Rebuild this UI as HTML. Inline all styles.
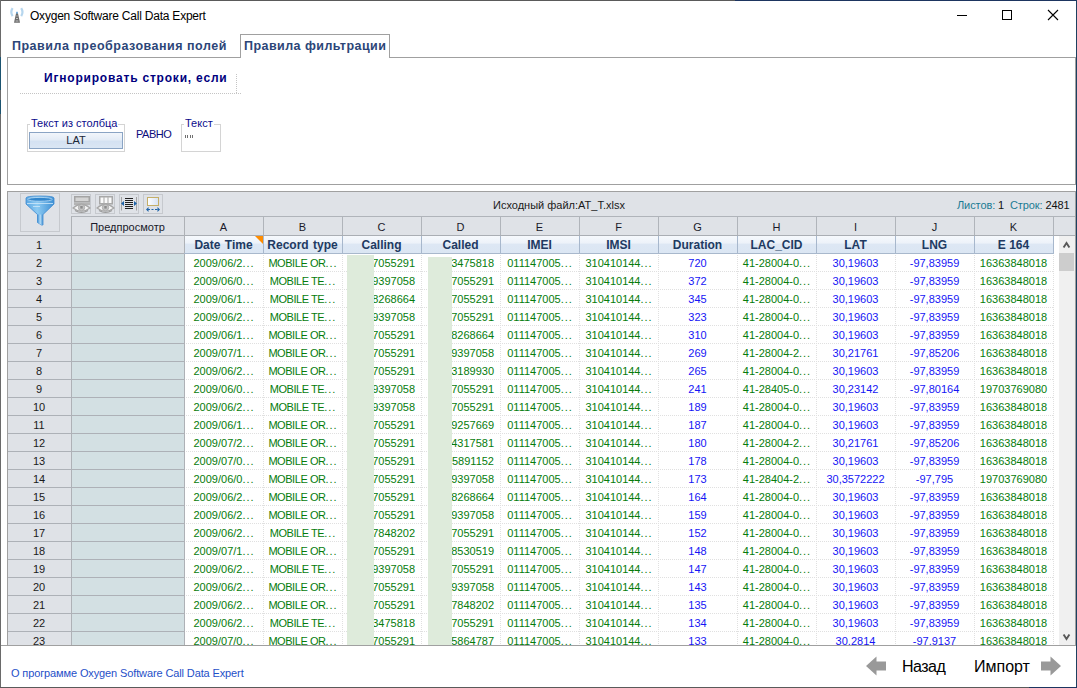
<!DOCTYPE html>
<html><head><meta charset="utf-8">
<style>
*{box-sizing:border-box}
html,body{margin:0;padding:0}
body{width:1077px;height:688px;overflow:hidden;position:relative;background:#fff;font-family:"Liberation Sans",sans-serif;}
.a{position:absolute}
.title{left:30px;top:8px;font-size:12px;color:#000;white-space:nowrap;line-height:16px;letter-spacing:-0.22px}
.tab1{left:12px;top:38px;font-size:12.5px;font-weight:bold;color:#2c4678;letter-spacing:0.5px;white-space:nowrap;line-height:16px}
.tab2box{left:240px;top:34px;width:150px;height:24px;border:1px solid #a0a0a0;border-bottom:none;background:#fff}
.tab2{left:244px;top:38px;font-size:12.5px;font-weight:bold;color:#2c4678;letter-spacing:0.45px;white-space:nowrap;line-height:16px}
.panel{left:7px;top:57px;width:1069px;height:128px;border:1px solid #a0a0a0;background:#fff}
.ign{left:44px;top:70px;font-size:12px;font-weight:bold;color:#00007e;letter-spacing:0.8px;white-space:nowrap;line-height:16px}
.dh{left:20px;top:93px;width:221px;height:1px;background-image:linear-gradient(90deg,#c4c4c4 50%,transparent 50%);background-size:2px 1px}
.dv{left:236px;top:74px;width:1px;height:19px;background-image:linear-gradient(180deg,#c4c4c4 50%,transparent 50%);background-size:1px 2px}
.gb{border:1px solid #d4d4d4}
.gl{font-size:11px;color:#0c0c8c;background:#fff;white-space:nowrap;line-height:13px;padding:0 1px}
.btn{left:29px;top:132px;width:94px;height:17px;border:1px solid #8aa4c4;background:linear-gradient(#f2f6fb 0%,#e4ecf6 45%,#d4e2f2 55%,#dae6f4 100%);font-size:11px;color:#1c2838;text-align:center;line-height:15px;letter-spacing:0px}
.ib{border:1px solid #c6c9ce;background:#dfe2e7}
.clip{left:0;top:0;width:1077px;height:645px;overflow:hidden}
.hl{position:absolute;height:1px}
.vl{position:absolute;width:1px}
.lt{position:absolute;top:217px;width:79px;height:19px;font-size:11px;color:#1a1a2a;text-align:center;line-height:20px}
.fh{position:absolute;top:237px;width:79px;height:17px;font-size:12px;font-weight:bold;color:#213a62;text-align:center;line-height:17px;white-space:nowrap}
.dc{position:absolute;width:79px;height:18px;font-size:11px;line-height:18px;text-align:center;white-space:nowrap}
.dc.r{text-align:right;padding-right:6px}
.el{letter-spacing:0.95px;margin-right:-0.95px}
.bb{letter-spacing:-0.45px}
.bb .el{letter-spacing:0.95px}
.g{color:#067c0c}
.b{color:#1515f5}
.rh{position:absolute;left:7px;width:64px;height:18px;font-size:11px;color:#1a1a1a;text-align:center;line-height:18px}
</style></head><body>
<!-- window borders -->
<div class="a" style="left:0;top:0;width:735px;height:1px;background:#5a5a5a"></div>
<div class="a" style="left:735px;top:0;width:342px;height:1px;background:#1d3560"></div>
<div class="a" style="left:0;top:0;width:1px;height:688px;background:#6a6a6a"></div>
<div class="a" style="left:0;top:57px;width:1px;height:33px;background:#1c5470"></div>
<div class="a" style="left:0;top:100px;width:1px;height:14px;background:#1c5470"></div>
<div class="a" style="left:1076px;top:0;width:1px;height:688px;background:#1d4060"></div>
<div class="a" style="left:0;top:687px;width:1029px;height:1px;background:#5a5a5a"></div>
<div class="a" style="left:1029px;top:687px;width:48px;height:1px;background:#1d3560"></div>

<!-- title bar -->
<svg class="a" style="left:8px;top:5px" width="18" height="20" viewBox="0 0 18 20">
 <path d="M4.6 3.2 Q2 7.2 4.6 11.2" stroke="#b6d6ee" stroke-width="2.2" fill="none"/>
 <path d="M13.2 3.2 Q15.8 7.2 13.2 11.2" stroke="#b6d6ee" stroke-width="2.2" fill="none"/>
 <path d="M8.2 7.5 L9.8 7.5 L12 17.8 L6 17.8 Z" fill="#6c6c6c"/>
 <path d="M8.4 11 H9.6 M8 13.5 H10 M7.6 16 H10.4" stroke="#d8d8d8" stroke-width="0.8"/>
 <rect x="8" y="6.8" width="2" height="1.8" fill="#78b0dc"/>
</svg>
<div class="a title">Oxygen Software Call Data Expert</div>
<svg class="a" style="left:950px;top:5px" width="120" height="20" viewBox="0 0 120 20">
 <path d="M7 10.5 H17" stroke="#000" stroke-width="1"/>
 <rect x="52.5" y="5.5" width="9" height="9" stroke="#000" stroke-width="1" fill="none"/>
 <path d="M98 5 L108 15 M108 5 L98 15" stroke="#000" stroke-width="1.1"/>
</svg>

<!-- tabs -->
<div class="a tab1">Правила преобразования полей</div>
<div class="a panel"></div>
<div class="a tab2box"></div>
<div class="a tab2">Правила фильтрации</div>

<div class="a ign">Игнорировать строки, если</div>
<div class="a dh"></div>
<div class="a dv"></div>

<div class="a gb" style="left:27px;top:124px;width:98px;height:28px"></div>
<div class="a gl" style="left:30px;top:117px">Текст из столбца</div>
<div class="a btn">LAT</div>
<div class="a" style="left:136px;top:128px;font-size:11px;color:#0c0c7c;line-height:13px;letter-spacing:-0.5px">РАВНО</div>
<div class="a gb" style="left:181px;top:124px;width:40px;height:28px"></div>
<div class="a gl" style="left:184px;top:117px">Текст</div>
<svg class="a" style="left:185px;top:135px" width="8" height="4"><path d="M0.5 0V3M2.5 0V3M5.5 0V3M7.5 0V3" stroke="#707070" stroke-width="1"/></svg>

<!-- grid -->
<div class="a" style="left:7px;top:191px;width:1069px;height:455px;background:#fff"></div>
<div class="a" style="left:8px;top:192px;width:1067px;height:43px;background:#dfe2e7"></div>
<div class="a ib" style="left:20px;top:193px;width:40px;height:39px"></div>
<svg class="a" style="left:20px;top:193px" width="40" height="39" viewBox="0 0 40 39">
 <defs>
  <linearGradient id="fg" x1="0" x2="1"><stop offset="0" stop-color="#5aa6e2"/><stop offset="0.4" stop-color="#8ccaf2"/><stop offset="1" stop-color="#3e90d4"/></linearGradient>
  <linearGradient id="sg" x1="0" x2="1"><stop offset="0" stop-color="#3d8ed4"/><stop offset="0.5" stop-color="#b4dcf6"/><stop offset="1" stop-color="#3a8ad0"/></linearGradient>
 </defs>
 <path d="M6 5 Q6 3 20 3 Q34 3 34 5 L34 11 L23 21.5 L23 32 L21.5 32 L17.5 29.5 L17.5 21.5 L6 11 Z" fill="url(#fg)" stroke="#3f8ad0" stroke-width="0.8"/>
 <path d="M17.5 21.5 L23 21.5 L23 32 L21.5 32 L17.5 29.5 Z" fill="url(#sg)"/>
 <ellipse cx="20" cy="6.3" rx="12.3" ry="1.9" fill="#3286cc" stroke="#c4e2f8" stroke-width="0.7"/>
 <path d="M7 10.5 L33 10.5" stroke="#cfe8fa" stroke-width="0.8"/>
 <path d="M13 13.5 L20 13.5" stroke="#e8f4fc" stroke-width="0.6"/>
</svg>
<div class="a ib" style="left:71px;top:194px;width:20px;height:20px"></div>
<div class="a ib" style="left:95px;top:194px;width:20px;height:20px"></div>
<div class="a ib" style="left:119px;top:194px;width:20px;height:20px"></div>
<div class="a ib" style="left:143px;top:194px;width:20px;height:20px"></div>
<svg class="a" style="left:71px;top:194px" width="92" height="20" viewBox="0 0 92 20">
 <!-- icon1 -->
 <rect x="3.75" y="2.75" width="14.5" height="5" fill="#d4d4d4" stroke="#a4a4a4" stroke-width="1.5"/>
 <path d="M3 8.5 H19 V11 H3 Z" fill="#b4b4b4"/>
 <path d="M2 14 Q10.5 6.5 19 14 Q10.5 20.5 2 14 Z" fill="#f6f6f6" stroke="#a8a8a8" stroke-width="1.2"/>
 <path d="M4 16.5 Q10.5 20.5 17 16.5" stroke="#9a9a9a" stroke-width="1.2" fill="none"/>
 <circle cx="10.5" cy="13.5" r="3.2" fill="#c4c4c4" stroke="#a4a4a4" stroke-width="0.8"/>
 <rect x="9.3" y="12" width="2.4" height="2.6" fill="#8c8c8c"/>
 <!-- icon2 -->
 <rect x="28.75" y="2.75" width="12.5" height="7" fill="#fafafa" stroke="#a8a8a8" stroke-width="1.5"/>
 <path d="M33 3 V9.5 M37 3 V9.5" stroke="#b4b4b4" stroke-width="1.2"/>
 <path d="M26 14 Q34.5 6.5 43 14 Q34.5 20.5 26 14 Z" fill="#f6f6f6" stroke="#a8a8a8" stroke-width="1.2"/>
 <path d="M28 16.5 Q34.5 20.5 41 16.5" stroke="#9a9a9a" stroke-width="1.2" fill="none"/>
 <circle cx="34.5" cy="13.5" r="3.2" fill="#c4c4c4" stroke="#a4a4a4" stroke-width="0.8"/>
 <rect x="33.3" y="12" width="2.4" height="2.6" fill="#8c8c8c"/>
 <!-- icon3 -->
 <path d="M50.5 3 V16.5 M65.5 3 V16.5" stroke="#a4a4a4"/>
 <path d="M54 4.5 H62 M54 6.5 H62 M54 8.5 H62 M54 10.5 H62 M54 12.5 H62 M54 14.5 H62" stroke="#202020"/>
 <path d="M50 9.5 L53 7 L53 12 Z M66 9.5 L63 7 L63 12 Z" fill="#1f64a8"/>
 <!-- icon4 -->
 <defs><linearGradient id="i4" x1="0" x2="1"><stop offset="0" stop-color="#ffffff"/><stop offset="1" stop-color="#d6e2f4"/></linearGradient></defs>
 <rect x="76.5" y="3.5" width="11" height="8" fill="url(#i4)" stroke="#c4ae68"/>
 <path d="M75 15.5 L77.5 13 L77.5 18 Z M89 15.5 L86.5 13 L86.5 18 Z" fill="#1f64a8"/>
 <path d="M77 15.5 H79 M80.5 15.5 H82.5 M84 15.5 H86.5" stroke="#1f64a8" stroke-width="1.2"/>
</svg>

<div class="a" style="left:493px;top:198px;font-size:11px;color:#1a1a1a;line-height:14px;white-space:nowrap">Исходный файл:AT_T.xlsx</div>
<div class="a" style="left:957px;top:198px;font-size:11px;line-height:14px;white-space:nowrap;letter-spacing:-0.1px"><span style="color:#1b7b93">Листов:</span><span style="color:#111"> 1</span><span style="color:#1b7b93">&nbsp; Строк:</span><span style="color:#111"> 2481</span></div>

<div class="a clip">
<div class="a" style="left:8px;top:236px;width:63px;height:409px;background:#dfe2e7"></div>
<div class="a" style="left:72px;top:236px;width:112px;height:17px;background:#dfe2e7"></div>
<div class="a" style="left:72px;top:254px;width:112px;height:391px;background:#d3e0e3"></div>
<div class="a" style="left:184px;top:236px;width:869px;height:17px;background:linear-gradient(#f6f9fd 0%,#edf2f9 40%,#dde7f4 50%,#dbe6f3 100%)"></div>
<div class="hl" style="left:184px;top:271px;width:870px;background-image:linear-gradient(90deg,#e0e0e0 50%,transparent 50%);background-size:2px 1px"></div>
<div class="hl" style="left:184px;top:289px;width:870px;background-image:linear-gradient(90deg,#e0e0e0 50%,transparent 50%);background-size:2px 1px"></div>
<div class="hl" style="left:184px;top:307px;width:870px;background-image:linear-gradient(90deg,#e0e0e0 50%,transparent 50%);background-size:2px 1px"></div>
<div class="hl" style="left:184px;top:325px;width:870px;background-image:linear-gradient(90deg,#e0e0e0 50%,transparent 50%);background-size:2px 1px"></div>
<div class="hl" style="left:184px;top:343px;width:870px;background-image:linear-gradient(90deg,#e0e0e0 50%,transparent 50%);background-size:2px 1px"></div>
<div class="hl" style="left:184px;top:361px;width:870px;background-image:linear-gradient(90deg,#e0e0e0 50%,transparent 50%);background-size:2px 1px"></div>
<div class="hl" style="left:184px;top:379px;width:870px;background-image:linear-gradient(90deg,#e0e0e0 50%,transparent 50%);background-size:2px 1px"></div>
<div class="hl" style="left:184px;top:397px;width:870px;background-image:linear-gradient(90deg,#e0e0e0 50%,transparent 50%);background-size:2px 1px"></div>
<div class="hl" style="left:184px;top:415px;width:870px;background-image:linear-gradient(90deg,#e0e0e0 50%,transparent 50%);background-size:2px 1px"></div>
<div class="hl" style="left:184px;top:433px;width:870px;background-image:linear-gradient(90deg,#e0e0e0 50%,transparent 50%);background-size:2px 1px"></div>
<div class="hl" style="left:184px;top:451px;width:870px;background-image:linear-gradient(90deg,#e0e0e0 50%,transparent 50%);background-size:2px 1px"></div>
<div class="hl" style="left:184px;top:469px;width:870px;background-image:linear-gradient(90deg,#e0e0e0 50%,transparent 50%);background-size:2px 1px"></div>
<div class="hl" style="left:184px;top:487px;width:870px;background-image:linear-gradient(90deg,#e0e0e0 50%,transparent 50%);background-size:2px 1px"></div>
<div class="hl" style="left:184px;top:505px;width:870px;background-image:linear-gradient(90deg,#e0e0e0 50%,transparent 50%);background-size:2px 1px"></div>
<div class="hl" style="left:184px;top:523px;width:870px;background-image:linear-gradient(90deg,#e0e0e0 50%,transparent 50%);background-size:2px 1px"></div>
<div class="hl" style="left:184px;top:541px;width:870px;background-image:linear-gradient(90deg,#e0e0e0 50%,transparent 50%);background-size:2px 1px"></div>
<div class="hl" style="left:184px;top:559px;width:870px;background-image:linear-gradient(90deg,#e0e0e0 50%,transparent 50%);background-size:2px 1px"></div>
<div class="hl" style="left:184px;top:577px;width:870px;background-image:linear-gradient(90deg,#e0e0e0 50%,transparent 50%);background-size:2px 1px"></div>
<div class="hl" style="left:184px;top:595px;width:870px;background-image:linear-gradient(90deg,#e0e0e0 50%,transparent 50%);background-size:2px 1px"></div>
<div class="hl" style="left:184px;top:613px;width:870px;background-image:linear-gradient(90deg,#e0e0e0 50%,transparent 50%);background-size:2px 1px"></div>
<div class="hl" style="left:184px;top:631px;width:870px;background-image:linear-gradient(90deg,#e0e0e0 50%,transparent 50%);background-size:2px 1px"></div>
<div class="hl" style="left:184px;top:649px;width:870px;background-image:linear-gradient(90deg,#e0e0e0 50%,transparent 50%);background-size:2px 1px"></div>
<div class="vl" style="left:263px;top:254px;height:391px;background-image:linear-gradient(180deg,#e0e0e0 50%,transparent 50%);background-size:1px 2px;background-position:0 1px"></div>
<div class="vl" style="left:342px;top:254px;height:391px;background-image:linear-gradient(180deg,#e0e0e0 50%,transparent 50%);background-size:1px 2px;background-position:0 1px"></div>
<div class="vl" style="left:421px;top:254px;height:391px;background-image:linear-gradient(180deg,#e0e0e0 50%,transparent 50%);background-size:1px 2px;background-position:0 1px"></div>
<div class="vl" style="left:500px;top:254px;height:391px;background-image:linear-gradient(180deg,#e0e0e0 50%,transparent 50%);background-size:1px 2px;background-position:0 1px"></div>
<div class="vl" style="left:579px;top:254px;height:391px;background-image:linear-gradient(180deg,#e0e0e0 50%,transparent 50%);background-size:1px 2px;background-position:0 1px"></div>
<div class="vl" style="left:658px;top:254px;height:391px;background-image:linear-gradient(180deg,#e0e0e0 50%,transparent 50%);background-size:1px 2px;background-position:0 1px"></div>
<div class="vl" style="left:737px;top:254px;height:391px;background-image:linear-gradient(180deg,#e0e0e0 50%,transparent 50%);background-size:1px 2px;background-position:0 1px"></div>
<div class="vl" style="left:816px;top:254px;height:391px;background-image:linear-gradient(180deg,#e0e0e0 50%,transparent 50%);background-size:1px 2px;background-position:0 1px"></div>
<div class="vl" style="left:895px;top:254px;height:391px;background-image:linear-gradient(180deg,#e0e0e0 50%,transparent 50%);background-size:1px 2px;background-position:0 1px"></div>
<div class="vl" style="left:974px;top:254px;height:391px;background-image:linear-gradient(180deg,#e0e0e0 50%,transparent 50%);background-size:1px 2px;background-position:0 1px"></div>
<div class="vl" style="left:1053px;top:254px;height:391px;background-image:linear-gradient(180deg,#e0e0e0 50%,transparent 50%);background-size:1px 2px;background-position:0 1px"></div>
<div class="hl" style="left:71px;top:216px;width:1004px;background:#b0b4ba"></div>
<div class="hl" style="left:8px;top:235px;width:1067px;background:#aaaeb4"></div>
<div class="vl" style="left:71px;top:216px;height:429px;background:#aeb1b6"></div>
<div class="vl" style="left:184px;top:216px;height:429px;background:#aeb1b6"></div>
<div class="vl" style="left:263px;top:216px;height:19px;background:#b0b4ba"></div>
<div class="vl" style="left:263px;top:236px;height:17px;background:#a7b7cc"></div>
<div class="vl" style="left:342px;top:216px;height:19px;background:#b0b4ba"></div>
<div class="vl" style="left:342px;top:236px;height:17px;background:#a7b7cc"></div>
<div class="vl" style="left:421px;top:216px;height:19px;background:#b0b4ba"></div>
<div class="vl" style="left:421px;top:236px;height:17px;background:#a7b7cc"></div>
<div class="vl" style="left:500px;top:216px;height:19px;background:#b0b4ba"></div>
<div class="vl" style="left:500px;top:236px;height:17px;background:#a7b7cc"></div>
<div class="vl" style="left:579px;top:216px;height:19px;background:#b0b4ba"></div>
<div class="vl" style="left:579px;top:236px;height:17px;background:#a7b7cc"></div>
<div class="vl" style="left:658px;top:216px;height:19px;background:#b0b4ba"></div>
<div class="vl" style="left:658px;top:236px;height:17px;background:#a7b7cc"></div>
<div class="vl" style="left:737px;top:216px;height:19px;background:#b0b4ba"></div>
<div class="vl" style="left:737px;top:236px;height:17px;background:#a7b7cc"></div>
<div class="vl" style="left:816px;top:216px;height:19px;background:#b0b4ba"></div>
<div class="vl" style="left:816px;top:236px;height:17px;background:#a7b7cc"></div>
<div class="vl" style="left:895px;top:216px;height:19px;background:#b0b4ba"></div>
<div class="vl" style="left:895px;top:236px;height:17px;background:#a7b7cc"></div>
<div class="vl" style="left:974px;top:216px;height:19px;background:#b0b4ba"></div>
<div class="vl" style="left:974px;top:236px;height:17px;background:#a7b7cc"></div>
<div class="vl" style="left:1053px;top:216px;height:19px;background:#b0b4ba"></div>
<div class="vl" style="left:1053px;top:236px;height:17px;background:#a7b7cc"></div>
<div class="hl" style="left:184px;top:253px;width:870px;background:#a8b8cc"></div>
<svg class="a" style="left:255px;top:236px" width="8" height="8"><path d="M0 0H8V8Z" fill="#ff8c00"/></svg>
<div class="hl" style="left:8px;top:253px;width:176px;background:#adb1b7"></div>
<div class="hl" style="left:8px;top:271px;width:176px;background:#adb1b7"></div>
<div class="hl" style="left:8px;top:289px;width:176px;background:#adb1b7"></div>
<div class="hl" style="left:8px;top:307px;width:176px;background:#adb1b7"></div>
<div class="hl" style="left:8px;top:325px;width:176px;background:#adb1b7"></div>
<div class="hl" style="left:8px;top:343px;width:176px;background:#adb1b7"></div>
<div class="hl" style="left:8px;top:361px;width:176px;background:#adb1b7"></div>
<div class="hl" style="left:8px;top:379px;width:176px;background:#adb1b7"></div>
<div class="hl" style="left:8px;top:397px;width:176px;background:#adb1b7"></div>
<div class="hl" style="left:8px;top:415px;width:176px;background:#adb1b7"></div>
<div class="hl" style="left:8px;top:433px;width:176px;background:#adb1b7"></div>
<div class="hl" style="left:8px;top:451px;width:176px;background:#adb1b7"></div>
<div class="hl" style="left:8px;top:469px;width:176px;background:#adb1b7"></div>
<div class="hl" style="left:8px;top:487px;width:176px;background:#adb1b7"></div>
<div class="hl" style="left:8px;top:505px;width:176px;background:#adb1b7"></div>
<div class="hl" style="left:8px;top:523px;width:176px;background:#adb1b7"></div>
<div class="hl" style="left:8px;top:541px;width:176px;background:#adb1b7"></div>
<div class="hl" style="left:8px;top:559px;width:176px;background:#adb1b7"></div>
<div class="hl" style="left:8px;top:577px;width:176px;background:#adb1b7"></div>
<div class="hl" style="left:8px;top:595px;width:176px;background:#adb1b7"></div>
<div class="hl" style="left:8px;top:613px;width:176px;background:#adb1b7"></div>
<div class="hl" style="left:8px;top:631px;width:176px;background:#adb1b7"></div>
<div class="a" style="left:71px;top:217px;width:113px;height:19px;font-size:11px;color:#1a1a2a;text-align:center;line-height:20px">Предпросмотр</div>
<div class="lt" style="left:184px">A</div>
<div class="lt" style="left:263px">B</div>
<div class="lt" style="left:342px">C</div>
<div class="lt" style="left:421px">D</div>
<div class="lt" style="left:500px">E</div>
<div class="lt" style="left:579px">F</div>
<div class="lt" style="left:658px">G</div>
<div class="lt" style="left:737px">H</div>
<div class="lt" style="left:816px">I</div>
<div class="lt" style="left:895px">J</div>
<div class="lt" style="left:974px">K</div>
<div class="fh" style="left:184px;word-spacing:1px">Date Time</div>
<div class="fh" style="left:263px;word-spacing:1px">Record type</div>
<div class="fh" style="left:342px">Calling</div>
<div class="fh" style="left:421px">Called</div>
<div class="fh" style="left:500px">IMEI</div>
<div class="fh" style="left:579px">IMSI</div>
<div class="fh" style="left:658px">Duration</div>
<div class="fh" style="left:737px">LAC_CID</div>
<div class="fh" style="left:816px">LAT</div>
<div class="fh" style="left:895px">LNG</div>
<div class="fh" style="left:974px">E 164</div>
<div class="dc g" style="left:184px;top:254px">2009/06/2<span class="el">...</span></div>
<div class="dc g bb" style="left:263px;top:254px">MOBILE OR<span class="el">...</span></div>
<div class="dc g r" style="left:342px;top:254px">7055291</div>
<div class="dc g r" style="left:421px;top:254px">3475818</div>
<div class="dc g" style="left:500px;top:254px">011147005<span class="el">...</span></div>
<div class="dc g" style="left:579px;top:254px">310410144<span class="el">...</span></div>
<div class="dc b" style="left:658px;top:254px">720</div>
<div class="dc g" style="left:737px;top:254px">41-28004-0<span class="el">...</span></div>
<div class="dc b" style="left:816px;top:254px">30,19603</div>
<div class="dc b" style="left:895px;top:254px">-97,83959</div>
<div class="dc g" style="left:974px;top:254px">16363848018</div>
<div class="dc g" style="left:184px;top:272px">2009/06/0<span class="el">...</span></div>
<div class="dc g bb" style="left:263px;top:272px">MOBILE TE<span class="el">...</span></div>
<div class="dc g r" style="left:342px;top:272px">9397058</div>
<div class="dc g r" style="left:421px;top:272px">7055291</div>
<div class="dc g" style="left:500px;top:272px">011147005<span class="el">...</span></div>
<div class="dc g" style="left:579px;top:272px">310410144<span class="el">...</span></div>
<div class="dc b" style="left:658px;top:272px">372</div>
<div class="dc g" style="left:737px;top:272px">41-28004-0<span class="el">...</span></div>
<div class="dc b" style="left:816px;top:272px">30,19603</div>
<div class="dc b" style="left:895px;top:272px">-97,83959</div>
<div class="dc g" style="left:974px;top:272px">16363848018</div>
<div class="dc g" style="left:184px;top:290px">2009/06/1<span class="el">...</span></div>
<div class="dc g bb" style="left:263px;top:290px">MOBILE TE<span class="el">...</span></div>
<div class="dc g r" style="left:342px;top:290px">8268664</div>
<div class="dc g r" style="left:421px;top:290px">7055291</div>
<div class="dc g" style="left:500px;top:290px">011147005<span class="el">...</span></div>
<div class="dc g" style="left:579px;top:290px">310410144<span class="el">...</span></div>
<div class="dc b" style="left:658px;top:290px">345</div>
<div class="dc g" style="left:737px;top:290px">41-28004-0<span class="el">...</span></div>
<div class="dc b" style="left:816px;top:290px">30,19603</div>
<div class="dc b" style="left:895px;top:290px">-97,83959</div>
<div class="dc g" style="left:974px;top:290px">16363848018</div>
<div class="dc g" style="left:184px;top:308px">2009/06/2<span class="el">...</span></div>
<div class="dc g bb" style="left:263px;top:308px">MOBILE TE<span class="el">...</span></div>
<div class="dc g r" style="left:342px;top:308px">9397058</div>
<div class="dc g r" style="left:421px;top:308px">7055291</div>
<div class="dc g" style="left:500px;top:308px">011147005<span class="el">...</span></div>
<div class="dc g" style="left:579px;top:308px">310410144<span class="el">...</span></div>
<div class="dc b" style="left:658px;top:308px">323</div>
<div class="dc g" style="left:737px;top:308px">41-28004-0<span class="el">...</span></div>
<div class="dc b" style="left:816px;top:308px">30,19603</div>
<div class="dc b" style="left:895px;top:308px">-97,83959</div>
<div class="dc g" style="left:974px;top:308px">16363848018</div>
<div class="dc g" style="left:184px;top:326px">2009/06/1<span class="el">...</span></div>
<div class="dc g bb" style="left:263px;top:326px">MOBILE OR<span class="el">...</span></div>
<div class="dc g r" style="left:342px;top:326px">7055291</div>
<div class="dc g r" style="left:421px;top:326px">8268664</div>
<div class="dc g" style="left:500px;top:326px">011147005<span class="el">...</span></div>
<div class="dc g" style="left:579px;top:326px">310410144<span class="el">...</span></div>
<div class="dc b" style="left:658px;top:326px">310</div>
<div class="dc g" style="left:737px;top:326px">41-28004-0<span class="el">...</span></div>
<div class="dc b" style="left:816px;top:326px">30,19603</div>
<div class="dc b" style="left:895px;top:326px">-97,83959</div>
<div class="dc g" style="left:974px;top:326px">16363848018</div>
<div class="dc g" style="left:184px;top:344px">2009/07/1<span class="el">...</span></div>
<div class="dc g bb" style="left:263px;top:344px">MOBILE OR<span class="el">...</span></div>
<div class="dc g r" style="left:342px;top:344px">7055291</div>
<div class="dc g r" style="left:421px;top:344px">9397058</div>
<div class="dc g" style="left:500px;top:344px">011147005<span class="el">...</span></div>
<div class="dc g" style="left:579px;top:344px">310410144<span class="el">...</span></div>
<div class="dc b" style="left:658px;top:344px">269</div>
<div class="dc g" style="left:737px;top:344px">41-28004-2<span class="el">...</span></div>
<div class="dc b" style="left:816px;top:344px">30,21761</div>
<div class="dc b" style="left:895px;top:344px">-97,85206</div>
<div class="dc g" style="left:974px;top:344px">16363848018</div>
<div class="dc g" style="left:184px;top:362px">2009/06/2<span class="el">...</span></div>
<div class="dc g bb" style="left:263px;top:362px">MOBILE OR<span class="el">...</span></div>
<div class="dc g r" style="left:342px;top:362px">7055291</div>
<div class="dc g r" style="left:421px;top:362px">3189930</div>
<div class="dc g" style="left:500px;top:362px">011147005<span class="el">...</span></div>
<div class="dc g" style="left:579px;top:362px">310410144<span class="el">...</span></div>
<div class="dc b" style="left:658px;top:362px">265</div>
<div class="dc g" style="left:737px;top:362px">41-28004-0<span class="el">...</span></div>
<div class="dc b" style="left:816px;top:362px">30,19603</div>
<div class="dc b" style="left:895px;top:362px">-97,83959</div>
<div class="dc g" style="left:974px;top:362px">16363848018</div>
<div class="dc g" style="left:184px;top:380px">2009/06/0<span class="el">...</span></div>
<div class="dc g bb" style="left:263px;top:380px">MOBILE TE<span class="el">...</span></div>
<div class="dc g r" style="left:342px;top:380px">9397058</div>
<div class="dc g r" style="left:421px;top:380px">7055291</div>
<div class="dc g" style="left:500px;top:380px">011147005<span class="el">...</span></div>
<div class="dc g" style="left:579px;top:380px">310410144<span class="el">...</span></div>
<div class="dc b" style="left:658px;top:380px">241</div>
<div class="dc g" style="left:737px;top:380px">41-28405-0<span class="el">...</span></div>
<div class="dc b" style="left:816px;top:380px">30,23142</div>
<div class="dc b" style="left:895px;top:380px">-97,80164</div>
<div class="dc g" style="left:974px;top:380px">19703769080</div>
<div class="dc g" style="left:184px;top:398px">2009/06/2<span class="el">...</span></div>
<div class="dc g bb" style="left:263px;top:398px">MOBILE TE<span class="el">...</span></div>
<div class="dc g r" style="left:342px;top:398px">9397058</div>
<div class="dc g r" style="left:421px;top:398px">7055291</div>
<div class="dc g" style="left:500px;top:398px">011147005<span class="el">...</span></div>
<div class="dc g" style="left:579px;top:398px">310410144<span class="el">...</span></div>
<div class="dc b" style="left:658px;top:398px">189</div>
<div class="dc g" style="left:737px;top:398px">41-28004-0<span class="el">...</span></div>
<div class="dc b" style="left:816px;top:398px">30,19603</div>
<div class="dc b" style="left:895px;top:398px">-97,83959</div>
<div class="dc g" style="left:974px;top:398px">16363848018</div>
<div class="dc g" style="left:184px;top:416px">2009/06/1<span class="el">...</span></div>
<div class="dc g bb" style="left:263px;top:416px">MOBILE OR<span class="el">...</span></div>
<div class="dc g r" style="left:342px;top:416px">7055291</div>
<div class="dc g r" style="left:421px;top:416px">9257669</div>
<div class="dc g" style="left:500px;top:416px">011147005<span class="el">...</span></div>
<div class="dc g" style="left:579px;top:416px">310410144<span class="el">...</span></div>
<div class="dc b" style="left:658px;top:416px">187</div>
<div class="dc g" style="left:737px;top:416px">41-28004-0<span class="el">...</span></div>
<div class="dc b" style="left:816px;top:416px">30,19603</div>
<div class="dc b" style="left:895px;top:416px">-97,83959</div>
<div class="dc g" style="left:974px;top:416px">16363848018</div>
<div class="dc g" style="left:184px;top:434px">2009/07/2<span class="el">...</span></div>
<div class="dc g bb" style="left:263px;top:434px">MOBILE OR<span class="el">...</span></div>
<div class="dc g r" style="left:342px;top:434px">7055291</div>
<div class="dc g r" style="left:421px;top:434px">4317581</div>
<div class="dc g" style="left:500px;top:434px">011147005<span class="el">...</span></div>
<div class="dc g" style="left:579px;top:434px">310410144<span class="el">...</span></div>
<div class="dc b" style="left:658px;top:434px">180</div>
<div class="dc g" style="left:737px;top:434px">41-28004-2<span class="el">...</span></div>
<div class="dc b" style="left:816px;top:434px">30,21761</div>
<div class="dc b" style="left:895px;top:434px">-97,85206</div>
<div class="dc g" style="left:974px;top:434px">16363848018</div>
<div class="dc g" style="left:184px;top:452px">2009/07/0<span class="el">...</span></div>
<div class="dc g bb" style="left:263px;top:452px">MOBILE OR<span class="el">...</span></div>
<div class="dc g r" style="left:342px;top:452px">7055291</div>
<div class="dc g r" style="left:421px;top:452px">5891152</div>
<div class="dc g" style="left:500px;top:452px">011147005<span class="el">...</span></div>
<div class="dc g" style="left:579px;top:452px">310410144<span class="el">...</span></div>
<div class="dc b" style="left:658px;top:452px">178</div>
<div class="dc g" style="left:737px;top:452px">41-28004-0<span class="el">...</span></div>
<div class="dc b" style="left:816px;top:452px">30,19603</div>
<div class="dc b" style="left:895px;top:452px">-97,83959</div>
<div class="dc g" style="left:974px;top:452px">16363848018</div>
<div class="dc g" style="left:184px;top:470px">2009/06/0<span class="el">...</span></div>
<div class="dc g bb" style="left:263px;top:470px">MOBILE OR<span class="el">...</span></div>
<div class="dc g r" style="left:342px;top:470px">7055291</div>
<div class="dc g r" style="left:421px;top:470px">9397058</div>
<div class="dc g" style="left:500px;top:470px">011147005<span class="el">...</span></div>
<div class="dc g" style="left:579px;top:470px">310410144<span class="el">...</span></div>
<div class="dc b" style="left:658px;top:470px">173</div>
<div class="dc g" style="left:737px;top:470px">41-28404-2<span class="el">...</span></div>
<div class="dc b" style="left:816px;top:470px">30,3572222</div>
<div class="dc b" style="left:895px;top:470px">-97,795</div>
<div class="dc g" style="left:974px;top:470px">19703769080</div>
<div class="dc g" style="left:184px;top:488px">2009/06/2<span class="el">...</span></div>
<div class="dc g bb" style="left:263px;top:488px">MOBILE OR<span class="el">...</span></div>
<div class="dc g r" style="left:342px;top:488px">7055291</div>
<div class="dc g r" style="left:421px;top:488px">8268664</div>
<div class="dc g" style="left:500px;top:488px">011147005<span class="el">...</span></div>
<div class="dc g" style="left:579px;top:488px">310410144<span class="el">...</span></div>
<div class="dc b" style="left:658px;top:488px">164</div>
<div class="dc g" style="left:737px;top:488px">41-28004-0<span class="el">...</span></div>
<div class="dc b" style="left:816px;top:488px">30,19603</div>
<div class="dc b" style="left:895px;top:488px">-97,83959</div>
<div class="dc g" style="left:974px;top:488px">16363848018</div>
<div class="dc g" style="left:184px;top:506px">2009/06/2<span class="el">...</span></div>
<div class="dc g bb" style="left:263px;top:506px">MOBILE OR<span class="el">...</span></div>
<div class="dc g r" style="left:342px;top:506px">7055291</div>
<div class="dc g r" style="left:421px;top:506px">9397058</div>
<div class="dc g" style="left:500px;top:506px">011147005<span class="el">...</span></div>
<div class="dc g" style="left:579px;top:506px">310410144<span class="el">...</span></div>
<div class="dc b" style="left:658px;top:506px">159</div>
<div class="dc g" style="left:737px;top:506px">41-28004-0<span class="el">...</span></div>
<div class="dc b" style="left:816px;top:506px">30,19603</div>
<div class="dc b" style="left:895px;top:506px">-97,83959</div>
<div class="dc g" style="left:974px;top:506px">16363848018</div>
<div class="dc g" style="left:184px;top:524px">2009/06/2<span class="el">...</span></div>
<div class="dc g bb" style="left:263px;top:524px">MOBILE TE<span class="el">...</span></div>
<div class="dc g r" style="left:342px;top:524px">7848202</div>
<div class="dc g r" style="left:421px;top:524px">7055291</div>
<div class="dc g" style="left:500px;top:524px">011147005<span class="el">...</span></div>
<div class="dc g" style="left:579px;top:524px">310410144<span class="el">...</span></div>
<div class="dc b" style="left:658px;top:524px">152</div>
<div class="dc g" style="left:737px;top:524px">41-28004-0<span class="el">...</span></div>
<div class="dc b" style="left:816px;top:524px">30,19603</div>
<div class="dc b" style="left:895px;top:524px">-97,83959</div>
<div class="dc g" style="left:974px;top:524px">16363848018</div>
<div class="dc g" style="left:184px;top:542px">2009/07/1<span class="el">...</span></div>
<div class="dc g bb" style="left:263px;top:542px">MOBILE OR<span class="el">...</span></div>
<div class="dc g r" style="left:342px;top:542px">7055291</div>
<div class="dc g r" style="left:421px;top:542px">8530519</div>
<div class="dc g" style="left:500px;top:542px">011147005<span class="el">...</span></div>
<div class="dc g" style="left:579px;top:542px">310410144<span class="el">...</span></div>
<div class="dc b" style="left:658px;top:542px">148</div>
<div class="dc g" style="left:737px;top:542px">41-28004-0<span class="el">...</span></div>
<div class="dc b" style="left:816px;top:542px">30,19603</div>
<div class="dc b" style="left:895px;top:542px">-97,83959</div>
<div class="dc g" style="left:974px;top:542px">16363848018</div>
<div class="dc g" style="left:184px;top:560px">2009/06/2<span class="el">...</span></div>
<div class="dc g bb" style="left:263px;top:560px">MOBILE TE<span class="el">...</span></div>
<div class="dc g r" style="left:342px;top:560px">9397058</div>
<div class="dc g r" style="left:421px;top:560px">7055291</div>
<div class="dc g" style="left:500px;top:560px">011147005<span class="el">...</span></div>
<div class="dc g" style="left:579px;top:560px">310410144<span class="el">...</span></div>
<div class="dc b" style="left:658px;top:560px">147</div>
<div class="dc g" style="left:737px;top:560px">41-28004-0<span class="el">...</span></div>
<div class="dc b" style="left:816px;top:560px">30,19603</div>
<div class="dc b" style="left:895px;top:560px">-97,83959</div>
<div class="dc g" style="left:974px;top:560px">16363848018</div>
<div class="dc g" style="left:184px;top:578px">2009/06/2<span class="el">...</span></div>
<div class="dc g bb" style="left:263px;top:578px">MOBILE OR<span class="el">...</span></div>
<div class="dc g r" style="left:342px;top:578px">7055291</div>
<div class="dc g r" style="left:421px;top:578px">9397058</div>
<div class="dc g" style="left:500px;top:578px">011147005<span class="el">...</span></div>
<div class="dc g" style="left:579px;top:578px">310410144<span class="el">...</span></div>
<div class="dc b" style="left:658px;top:578px">143</div>
<div class="dc g" style="left:737px;top:578px">41-28004-0<span class="el">...</span></div>
<div class="dc b" style="left:816px;top:578px">30,19603</div>
<div class="dc b" style="left:895px;top:578px">-97,83959</div>
<div class="dc g" style="left:974px;top:578px">16363848018</div>
<div class="dc g" style="left:184px;top:596px">2009/06/2<span class="el">...</span></div>
<div class="dc g bb" style="left:263px;top:596px">MOBILE OR<span class="el">...</span></div>
<div class="dc g r" style="left:342px;top:596px">7055291</div>
<div class="dc g r" style="left:421px;top:596px">7848202</div>
<div class="dc g" style="left:500px;top:596px">011147005<span class="el">...</span></div>
<div class="dc g" style="left:579px;top:596px">310410144<span class="el">...</span></div>
<div class="dc b" style="left:658px;top:596px">135</div>
<div class="dc g" style="left:737px;top:596px">41-28004-0<span class="el">...</span></div>
<div class="dc b" style="left:816px;top:596px">30,19603</div>
<div class="dc b" style="left:895px;top:596px">-97,83959</div>
<div class="dc g" style="left:974px;top:596px">16363848018</div>
<div class="dc g" style="left:184px;top:614px">2009/06/2<span class="el">...</span></div>
<div class="dc g bb" style="left:263px;top:614px">MOBILE TE<span class="el">...</span></div>
<div class="dc g r" style="left:342px;top:614px">3475818</div>
<div class="dc g r" style="left:421px;top:614px">7055291</div>
<div class="dc g" style="left:500px;top:614px">011147005<span class="el">...</span></div>
<div class="dc g" style="left:579px;top:614px">310410144<span class="el">...</span></div>
<div class="dc b" style="left:658px;top:614px">134</div>
<div class="dc g" style="left:737px;top:614px">41-28004-0<span class="el">...</span></div>
<div class="dc b" style="left:816px;top:614px">30,19603</div>
<div class="dc b" style="left:895px;top:614px">-97,83959</div>
<div class="dc g" style="left:974px;top:614px">16363848018</div>
<div class="dc g" style="left:184px;top:632px">2009/07/0<span class="el">...</span></div>
<div class="dc g bb" style="left:263px;top:632px">MOBILE OR<span class="el">...</span></div>
<div class="dc g r" style="left:342px;top:632px">7055291</div>
<div class="dc g r" style="left:421px;top:632px">5864787</div>
<div class="dc g" style="left:500px;top:632px">011147005<span class="el">...</span></div>
<div class="dc g" style="left:579px;top:632px">310410144<span class="el">...</span></div>
<div class="dc b" style="left:658px;top:632px">133</div>
<div class="dc g" style="left:737px;top:632px">41-28004-0<span class="el">...</span></div>
<div class="dc b" style="left:816px;top:632px">30.2814</div>
<div class="dc b" style="left:895px;top:632px">-97.9137</div>
<div class="dc g" style="left:974px;top:632px">16363848018</div>
<div class="a" style="left:347px;top:255px;width:27px;height:390px;background:#deebdb"></div>
<div class="a" style="left:428px;top:257px;width:24px;height:388px;background:#deebdb"></div>
<div class="rh" style="top:236px">1</div>
<div class="rh" style="top:254px">2</div>
<div class="rh" style="top:272px">3</div>
<div class="rh" style="top:290px">4</div>
<div class="rh" style="top:308px">5</div>
<div class="rh" style="top:326px">6</div>
<div class="rh" style="top:344px">7</div>
<div class="rh" style="top:362px">8</div>
<div class="rh" style="top:380px">9</div>
<div class="rh" style="top:398px">10</div>
<div class="rh" style="top:416px">11</div>
<div class="rh" style="top:434px">12</div>
<div class="rh" style="top:452px">13</div>
<div class="rh" style="top:470px">14</div>
<div class="rh" style="top:488px">15</div>
<div class="rh" style="top:506px">16</div>
<div class="rh" style="top:524px">17</div>
<div class="rh" style="top:542px">18</div>
<div class="rh" style="top:560px">19</div>
<div class="rh" style="top:578px">20</div>
<div class="rh" style="top:596px">21</div>
<div class="rh" style="top:614px">22</div>
<div class="rh" style="top:632px">23</div>
</div>

<!-- scrollbar -->
<div class="a" style="left:1059px;top:236px;width:16px;height:409px;background:#f0f0f0"></div>
<div class="a" style="left:1059px;top:253px;width:15px;height:18px;background:#cdcdcd"></div>
<svg class="a" style="left:1059px;top:236px" width="16" height="409" viewBox="0 0 16 409">
 <path d="M4.6 11.6 L7.5 7 L10.4 11.6" stroke="#585858" stroke-width="1.9" fill="none"/>
 <path d="M4.6 398.4 L7.5 403 L10.4 398.4" stroke="#585858" stroke-width="1.9" fill="none"/>
</svg>
<!-- grid border -->
<div class="a" style="left:1px;top:645px;width:1075px;height:1px;background:#a0a0a0"></div>
<div class="a" style="left:7px;top:191px;width:1069px;height:455px;border:1px solid #a0a0a0"></div>

<!-- bottom -->
<div class="a" style="left:11px;top:666px;font-size:11px;color:#1f50c8;line-height:14px;white-space:nowrap;letter-spacing:-0.12px">О программе Oxygen Software Call Data Expert</div>
<svg class="a" style="left:864px;top:655px" width="24" height="22" viewBox="0 0 24 22">
 <path d="M2 11 L12.5 1.5 L12.5 6.5 L22 6.5 L22 15.5 L12.5 15.5 L12.5 20.5 Z" fill="#999"/>
</svg>
<div class="a" style="left:902px;top:657px;font-size:16px;color:#000;line-height:20px;white-space:nowrap;letter-spacing:-0.5px">Назад</div>
<div class="a" style="left:974px;top:657px;font-size:16px;color:#000;line-height:20px;white-space:nowrap">Импорт</div>
<svg class="a" style="left:1039px;top:655px" width="24" height="22" viewBox="0 0 24 22">
 <path d="M22 11 L11.5 1.5 L11.5 6.5 L2 6.5 L2 15.5 L11.5 15.5 L11.5 20.5 Z" fill="#999"/>
</svg>
</body></html>
